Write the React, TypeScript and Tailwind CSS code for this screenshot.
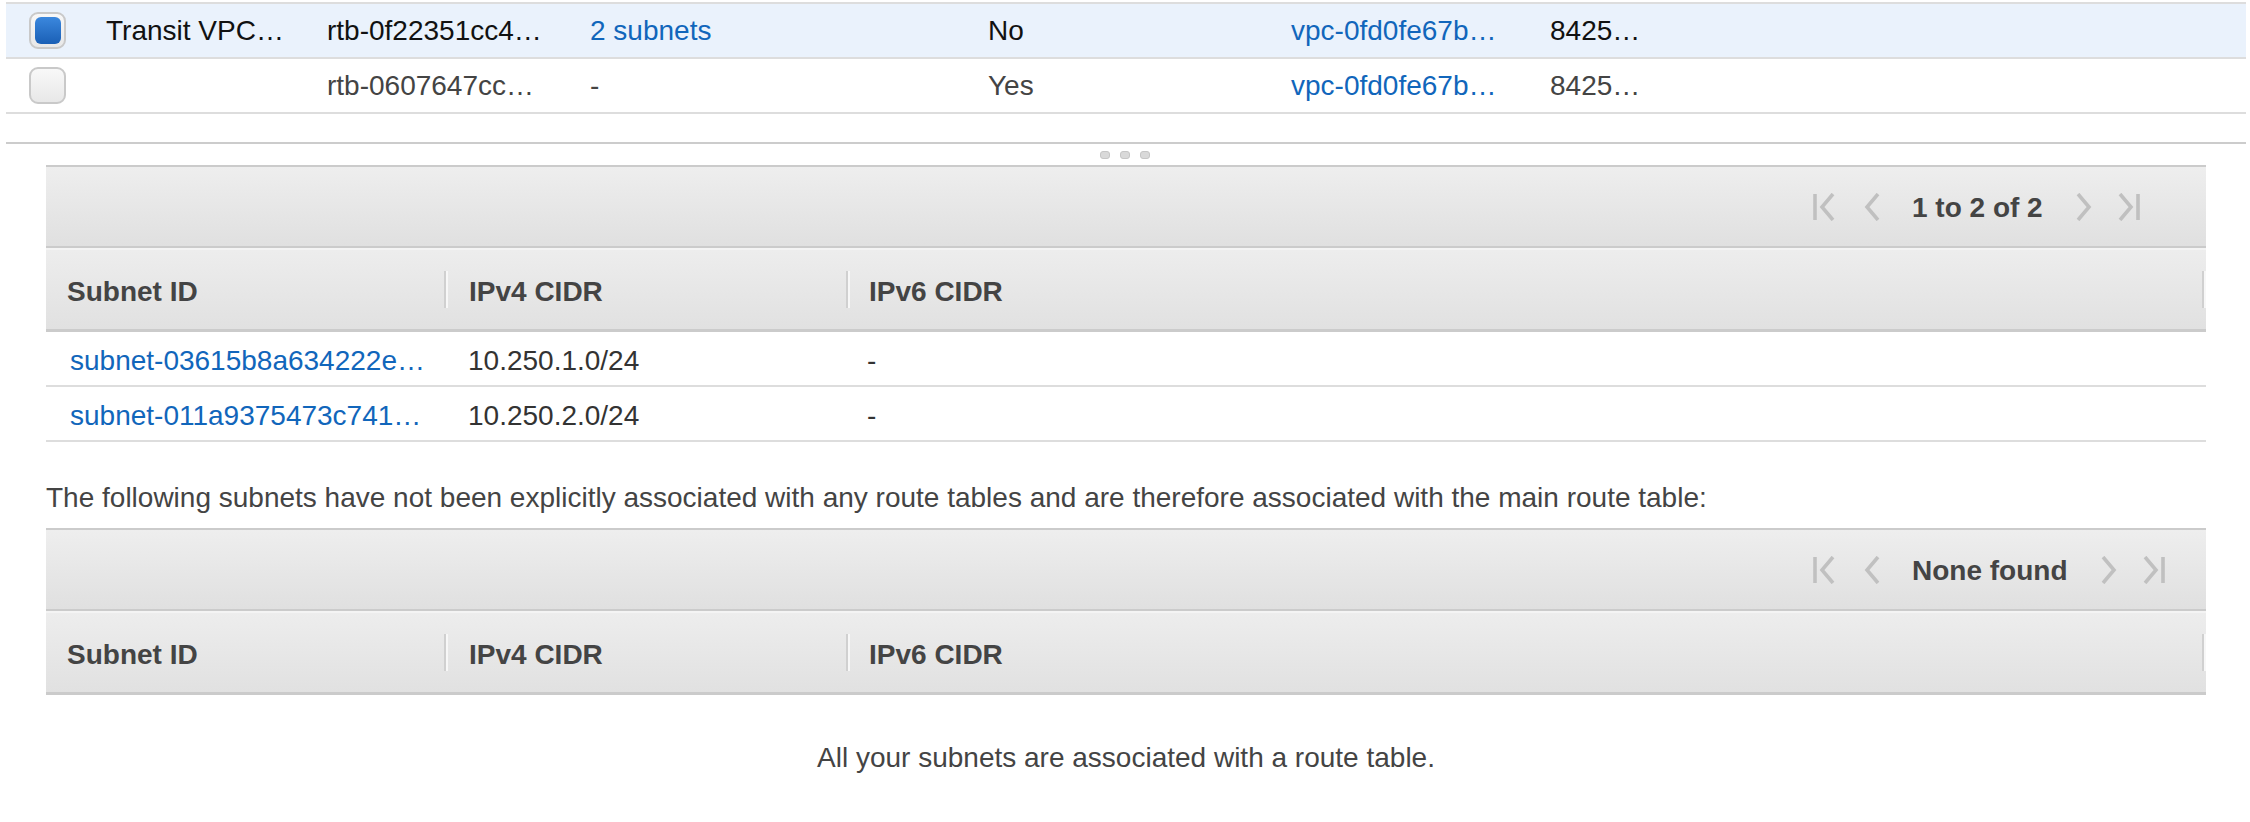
import React from "react";

type RouteRow = {
  name: string;
  id: string;
  subnets: string;
  main: string;
  vpc: string;
  owner: string;
  selected: boolean;
};

const routeRows: RouteRow[] = [
  { name: "Transit VPC…", id: "rtb-0f22351cc4…", subnets: "2 subnets", main: "No", vpc: "vpc-0fd0fe67b…", owner: "8425…", selected: true },
  { name: "", id: "rtb-0607647cc…", subnets: "-", main: "Yes", vpc: "vpc-0fd0fe67b…", owner: "8425…", selected: false },
];

const subnets = [
  { id: "subnet-03615b8a634222e…", v4: "10.250.1.0/24", v6: "-" },
  { id: "subnet-011a9375473c741…", v4: "10.250.2.0/24", v6: "-" },
];

const Checkbox: React.FC<{ checked: boolean }> = ({ checked }) => (
  <div className="w-[37px] h-[37px] rounded-[9px] border-2 border-[#c9c9c9] bg-gradient-to-b from-[#f8f8f8] to-[#e8e8e8] flex items-center justify-center">
    {checked && <div className="w-[26px] h-[27px] rounded-[6px] bg-gradient-to-b from-[#3b88de] to-[#1a5fb5]" />}
  </div>
);

// disabled pager arrows
const PagerIcon: React.FC<{ kind: "first" | "prev" | "next" | "last" }> = ({ kind }) => {
  const wide = kind === "first" || kind === "last";
  const w = wide ? 22 : 16;
  return (
    <svg width={w} height={28} viewBox={`0 0 ${w} 28`} fill="none" stroke="#c0c0c0" strokeWidth={3.6}>
      {kind === "first" && (
        <>
          <line x1="2" y1="1" x2="2" y2="27" />
          <polyline points="20,1 9,14 20,27" />
        </>
      )}
      {kind === "prev" && <polyline points="14,1 3,14 14,27" />}
      {kind === "next" && <polyline points="2,1 13,14 2,27" />}
      {kind === "last" && (
        <>
          <polyline points="2,1 13,14 2,27" />
          <line x1="20" y1="1" x2="20" y2="27" />
        </>
      )}
    </svg>
  );
};

const Pager: React.FC<{ label: string }> = ({ label }) => (
  <div className="h-[83px] border-t-2 border-b-2 border-[#cbcbcb] bg-gradient-to-b from-[#eeeeee] to-[#e0e0e0] flex items-center justify-end">
    <div className="w-[393px] flex items-center">
      <PagerIcon kind="first" />
      <span className="ml-[29px]"><PagerIcon kind="prev" /></span>
      <span className="ml-[32px] pt-[3px] font-bold text-[#444444]">{label}</span>
      <span className="ml-[33px]"><PagerIcon kind="next" /></span>
      <span className="ml-[26px]"><PagerIcon kind="last" /></span>
    </div>
  </div>
);

const Sep = () => <span className="w-[4px] h-[37px] border-l-2 border-[#d0d0d0] border-r-2 border-r-[#f7f7f7]" />;

const ColumnHeader = () => (
  <div className="h-[84px] border-t-2 border-t-[#f4f4f4] border-b-[3px] border-[#cbcbcb] bg-gradient-to-b from-[#ededed] to-[#e1e1e1] flex items-center font-bold text-[#444444]">
    <div className="w-[398px] pl-[21px] pt-[4px]">Subnet ID</div>
    <div className="w-[402px] flex items-center">
      <Sep />
      <span className="ml-[21px] pt-[4px]">IPv4 CIDR</span>
    </div>
    <div className="flex-1 flex items-center">
      <Sep />
      <span className="ml-[19px] pt-[4px]">IPv6 CIDR</span>
      <span className="ml-auto flex"><Sep /></span>
    </div>
  </div>
);

export default function App() {
  return (
    <div className="w-[2250px] h-[822px] bg-white text-[28px] leading-[32px] text-[#444444] font-['Liberation_Sans',Arial,sans-serif] overflow-hidden">
      {/* route tables list */}
      <div className="pt-[2px] ml-[6px] mr-[4px]">
        <div className="border-t-2 border-[#dddddd] border-b-2 border-b-[#cccccc]">
          {routeRows.map((r) => (
            <div
              key={r.id}
              className={`h-[55px] border-b-2 border-[#dddddd] flex items-center ${r.selected ? "bg-[#eaf2fc] text-[#111111]" : "text-[#444444]"}`}
            >
              <div className="w-[100px] pl-[23px]"><Checkbox checked={r.selected} /></div>
              <div className="w-[221px]">{r.name}</div>
              <div className="w-[263px]">{r.id}</div>
              <div className={`w-[398px] ${r.subnets !== "-" ? "text-[#1166bb]" : ""}`}>{r.subnets}</div>
              <div className="w-[303px]">{r.main}</div>
              <div className="w-[259px] text-[#1166bb]">{r.vpc}</div>
              <div className="flex-1">{r.owner}</div>
            </div>
          ))}
          <div className="h-[28px]" />
        </div>
      </div>

      {/* resize grip */}
      <div className="h-[21px] flex justify-center gap-[10px] pt-[7px]">
        <span className="w-[10px] h-[8px] rounded-[3px] bg-[#d9d9d9] border border-[#c6c6c6]" />
        <span className="w-[10px] h-[8px] rounded-[3px] bg-[#d9d9d9] border border-[#c6c6c6]" />
        <span className="w-[10px] h-[8px] rounded-[3px] bg-[#d9d9d9] border border-[#c6c6c6]" />
      </div>

      <div className="ml-[46px] w-[2160px]">
        <Pager label="1 to 2 of 2" />
        <ColumnHeader />
        {subnets.map((s) => (
          <div key={s.id} className="h-[55px] pt-[4px] border-b-2 border-[#dddddd] grid grid-cols-[398px_402px_1fr] items-center">
            <div className="pl-[24px] text-[#1166bb]">{s.id}</div>
            <div className="pl-[24px] text-[#333333]">{s.v4}</div>
            <div className="pl-[21px] text-[#333333]">{s.v6}</div>
          </div>
        ))}
      </div>

      <p className="ml-[46px] mt-[40px]">
        The following subnets have not been explicitly associated with any route tables and are therefore associated with the main route table:
      </p>

      <div className="ml-[46px] w-[2160px] mt-[14px]">
        <Pager label="None found" />
        <ColumnHeader />
        <div className="mt-[47px] text-center text-[#444444]">All your subnets are associated with a route table.</div>
      </div>
    </div>
  );
}
